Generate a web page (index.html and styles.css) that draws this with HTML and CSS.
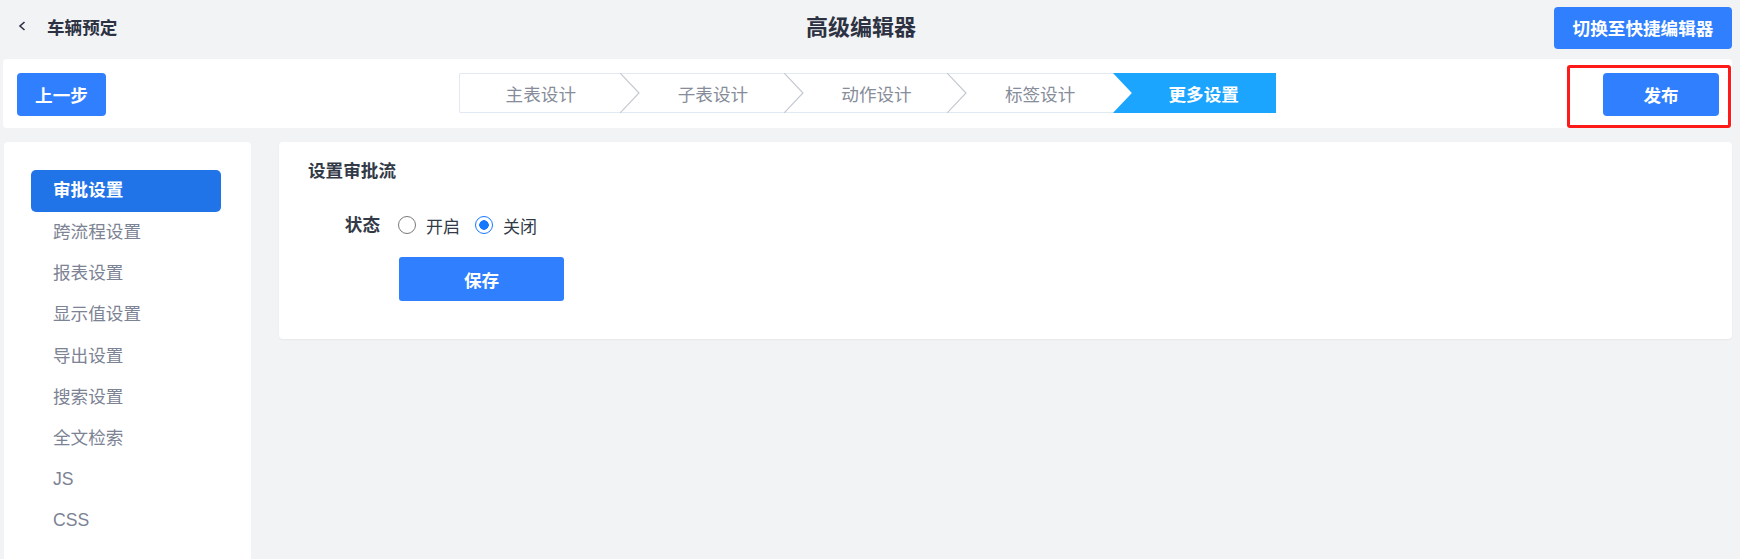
FILE: index.html
```html
<!DOCTYPE html>
<html lang="zh-CN">
<head>
    <meta charset="UTF-8">
    <meta name="viewport" content="width=device-width, initial-scale=1.0">
    <title>高级编辑器</title>
    <link rel="stylesheet" href="styles.css">
</head>
<body>
    <!-- 顶部标题栏 -->
    <header class="top-bar">
        <div class="top-left">
            <svg class="back-icon" viewBox="0 0 8 10" width="8" height="10">
                <polyline points="6.5,1 2,5 6.5,9" />
            </svg>
            <span class="page-name">车辆预定</span>
        </div>
        <h1 class="editor-title">高级编辑器</h1>
        <div class="top-right">
            <button class="btn btn-switch">切换至快捷编辑器</button>
        </div>
    </header>

    <!-- 步骤工具栏 -->
    <div class="toolbar">
        <div class="toolbar-left">
            <button class="btn btn-prev">上一步</button>
        </div>
        <div class="steps">
            <div class="step">主表设计</div>
            <div class="step">
                <svg class="chev" viewBox="0 0 20 40" width="20" height="40"><polyline points="0,0 19,20 0,40" /></svg>
                子表设计
            </div>
            <div class="step">
                <svg class="chev" viewBox="0 0 20 40" width="20" height="40"><polyline points="0,0 19,20 0,40" /></svg>
                动作设计
            </div>
            <div class="step">
                <svg class="chev" viewBox="0 0 20 40" width="20" height="40"><polyline points="0,0 19,20 0,40" /></svg>
                标签设计
            </div>
            <div class="step step-active">更多设置</div>
        </div>
        <div class="toolbar-right">
            <div class="highlight">
                <button class="btn btn-publish">发布</button>
            </div>
        </div>
    </div>

    <!-- 主体 -->
    <div class="content">
        <nav class="side-menu">
            <a class="menu-item active">审批设置</a>
            <a class="menu-item">跨流程设置</a>
            <a class="menu-item">报表设置</a>
            <a class="menu-item">显示值设置</a>
            <a class="menu-item">导出设置</a>
            <a class="menu-item">搜索设置</a>
            <a class="menu-item">全文检索</a>
            <a class="menu-item">JS</a>
            <a class="menu-item">CSS</a>
        </nav>

        <section class="panel">
            <h2 class="panel-title">设置审批流</h2>
            <div class="form-row">
                <label class="form-label">状态</label>
                <div class="radio-group">
                    <label class="radio"><input type="radio" name="flow"> 开启</label>
                    <label class="radio"><input type="radio" name="flow" checked> 关闭</label>
                </div>
            </div>
            <div class="form-row">
                <span class="form-label"></span>
                <button class="btn btn-save">保存</button>
            </div>
        </section>
    </div>
</body>
</html>
```

FILE: styles.css
```css
* {
    margin: 0;
    padding: 0;
    box-sizing: border-box;
}

body {
    font-family: 'Liberation Sans', 'Noto Sans CJK SC', sans-serif;
    background: #f2f3f5;
    color: #333a47;
    overflow: hidden;
}

.btn {
    border: none;
    border-radius: 4px;
    background: #2f7fff;
    color: white;
    font-family: inherit;
    font-size: 17.6px;
    font-weight: bold;
    cursor: pointer;
}

/* 顶部标题栏 */
.top-bar {
    height: 59px;
    padding: 0 8px 3px 18px;
    display: grid;
    grid-template-columns: 1fr auto 1fr;
    align-items: center;
}

.top-left {
    display: flex;
    align-items: center;
    gap: 21px;
    margin-bottom: 4px;
}

.back-icon polyline {
    fill: none;
    stroke: #2c3242;
    stroke-width: 1.6;
}

.page-name {
    font-size: 17.6px;
    font-weight: bold;
    color: #2c3242;
}

.editor-title {
    font-size: 22px;
    font-weight: bold;
    color: #2c3242;
    margin: 0 28px 6px 0;
}

.top-right {
    display: flex;
    justify-content: flex-end;
}

.btn-switch {
    width: 178px;
    height: 42px;
    margin-bottom: 1px;
}

/* 步骤工具栏 */
.toolbar {
    margin: 0 8px 0 3px;
    height: 69px;
    background: white;
    border-radius: 4px;
    display: grid;
    grid-template-columns: 1fr auto 1fr;
    align-items: center;
}

.toolbar-left {
    padding-left: 14px;
}

.btn-prev {
    width: 89px;
    height: 43px;
    margin-top: 1px;
}

.steps {
    display: flex;
    width: 818px;
    height: 40px;
    margin-top: -1px;
}

.step {
    position: relative;
    flex: 0 0 20%;
    display: flex;
    align-items: center;
    justify-content: center;
    padding-left: 18px;
    border-top: 1px solid #e1e9f3;
    border-bottom: 1px solid #e1e9f3;
    font-size: 17.6px;
    color: #868c99;
}

.step:first-child {
    padding-left: 0;
    border-left: 1px solid #e1e9f3;
    border-radius: 2px 0 0 2px;
}

.chev {
    position: absolute;
    left: -2px;
    top: -1px;
}

.chev polyline {
    fill: none;
    stroke: #c4c8d0;
    stroke-width: 1.2;
}

.step-active {
    border: none;
    background: #1ba5ff;
    color: white;
    font-weight: bold;
    clip-path: polygon(0 0, 100% 0, 100% 100%, 0 100%, 19px 50%);
}

.toolbar-right {
    display: flex;
    justify-content: flex-end;
    align-self: stretch;
    padding: 6px 1px 0 0;
}

/* 标注红框 */
.highlight {
    border: 3px solid #ff1a1a;
    border-radius: 3px;
    padding: 5px 9px 9px 33px;
}

.btn-publish {
    width: 116px;
    height: 43px;
}

/* 主体 */
.content {
    display: flex;
    align-items: flex-start;
    gap: 28px;
    padding: 14px 8px 0 4px;
}

.side-menu {
    width: 247px;
    min-height: 440px;
    background: white;
    border-radius: 4px;
    padding: 28px 30px 0 27px;
    display: flex;
    flex-direction: column;
}

.menu-item {
    height: 41.2px;
    line-height: 41.2px;
    padding-left: 22px;
    font-size: 17.6px;
    color: #7c8394;
    border-radius: 5px;
}

.menu-item.active {
    height: 42px;
    background: #2173e8;
    color: white;
    font-weight: bold;
}

.panel {
    flex: 1;
    background: white;
    border-radius: 4px;
    padding: 16px 29px 38px;
    box-shadow: 0 1px 2px rgba(0, 0, 0, 0.05);
}

.panel-title {
    font-size: 17.6px;
    font-weight: bold;
    line-height: 26px;
    color: #333a47;
    margin-bottom: 28px;
}

.form-row {
    display: flex;
    align-items: center;
}

.form-row + .form-row {
    margin-top: 19px;
}

.form-label {
    width: 90px;
    padding-right: 18px;
    text-align: right;
    font-size: 17.6px;
    font-weight: bold;
    line-height: 26px;
    color: #333a47;
}

.radio-group {
    display: flex;
    gap: 15px;
}

.radio {
    display: flex;
    align-items: center;
    gap: 10px;
    font-size: 17px;
    color: #333a47;
}

.radio input {
    appearance: none;
    width: 18px;
    height: 18px;
    border: 1.5px solid #7a7a7a;
    border-radius: 50%;
    margin: 0;
}

.radio input:checked {
    border-color: #1677ff;
    background: radial-gradient(circle, #1677ff 0 4.5px, white 5px);
}

.btn-save {
    width: 165px;
    height: 44px;
    margin-left: 1px;
    border-radius: 3px;
}
```
